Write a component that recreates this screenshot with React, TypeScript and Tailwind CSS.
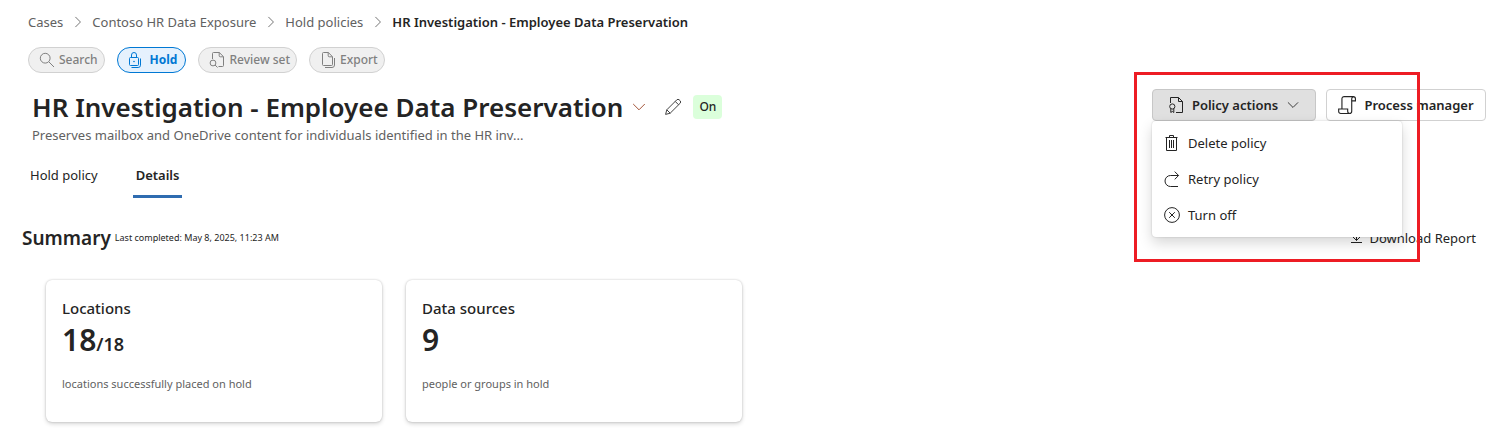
import React, { useState } from 'react';

type IconProps = { className?: string };

function Icon({ className, children }: IconProps & { children: React.ReactNode }) {
  return (
    <svg
      viewBox="0 0 16 16"
      fill="none"
      stroke="currentColor"
      strokeWidth="1"
      aria-hidden="true"
      className={`shrink-0 ${className ?? 'w-4 h-4'}`}
    >
      {children}
    </svg>
  );
}

function SearchIcon(props: IconProps) {
  return (
    <Icon {...props}>
      <circle cx="6.2" cy="6.2" r="4.9" />
      <path d="M9.8 9.8 15 15" />
    </Icon>
  );
}

function HoldIcon(props: IconProps) {
  return (
    <Icon {...props}>
      <rect x="1.5" y="5.5" width="9" height="8" rx="1" />
      <path d="M3.5 5.5V3a2.5 2.5 0 0 1 5 0v2.5" />
      <circle cx="6" cy="9.5" r="0.8" fill="currentColor" stroke="none" />
      <path d="M12.5 6.5v6.7a2.3 2.3 0 0 1-2.3 2.3H3.5" />
    </Icon>
  );
}

function ReviewSetIcon(props: IconProps) {
  return (
    <Icon {...props}>
      <path d="M3.5 7V1.5a1 1 0 0 1 1-1h5.8l4.2 4.2v8.8a1 1 0 0 1-1 1H9.5" />
      <path d="M10.2.5v3.3a1 1 0 0 0 1 1h3.3" />
      <circle cx="4" cy="11" r="2.9" />
      <path d="m6.1 13 2.4 2.5" />
    </Icon>
  );
}

function ExportIcon(props: IconProps) {
  return (
    <Icon {...props}>
      <path d="M2.5 1.5a1 1 0 0 1 1-1h4.8l4.2 4.2v7.8a1 1 0 0 1-1 1h-8a1 1 0 0 1-1-1z" />
      <path d="M8.2.5v3.3a1 1 0 0 0 1 1h3.3" />
      <path d="M14.5 6v7a2.5 2.5 0 0 1-2.5 2.5H5" />
    </Icon>
  );
}

function PolicyIcon(props: IconProps) {
  return (
    <Icon {...props}>
      <path d="M2.5 6V.5h8l4 4v11H8" />
      <path d="M10.5.5v4h4" />
      <circle cx="4.3" cy="9.5" r="2.6" />
      <path d="M2.8 11.7v3.8l1.5-1.1 1.5 1.1v-3.8" />
    </Icon>
  );
}

function ScrollIcon(props: IconProps) {
  return (
    <Icon {...props}>
      <path d="M3.5 11.5v-9a2 2 0 0 1 2-2h8a2 2 0 0 1 2 2v1.8h-3.3" />
      <path d="M13.8.6a1.9 1.9 0 0 0-1.6 1.9v11a2 2 0 0 1-2 2" />
      <path d="M.6 11.6h8v1.9a2 2 0 0 0 2 2H2.4a1.8 1.8 0 0 1-1.8-1.8z" />
    </Icon>
  );
}

function TrashIcon(props: IconProps) {
  return (
    <Icon {...props}>
      <path d="M1.5 2.5h12M5.5 2.5v-2h4v2M2.5 2.5v13h10v-13" />
      <path d="M5.5 5v8M7.5 5v8M9.5 5v8" />
    </Icon>
  );
}

function RetryIcon(props: IconProps) {
  return (
    <Icon {...props}>
      <path d="M14.5 4.5H6.5a5.5 5.5 0 0 0 0 11h7.5" />
      <path d="m10.7.6 3.9 3.9-3.9 3.9" />
    </Icon>
  );
}

function TurnOffIcon(props: IconProps) {
  return (
    <Icon {...props}>
      <circle cx="8" cy="8" r="7.4" />
      <path d="m5.2 5.2 5.6 5.6M10.8 5.2l-5.6 5.6" />
    </Icon>
  );
}

function PencilIcon(props: IconProps) {
  return (
    <Icon {...props}>
      <path d="m.6 15.4 1.2-4.6L11.6 1a1.9 1.9 0 0 1 2.8 0l.6.6a1.9 1.9 0 0 1 0 2.8L5.2 14.2z" />
      <path d="m10.2 2.4 3.4 3.4M1.8 10.8l3.4 3.4" />
    </Icon>
  );
}

function DownloadIcon(props: IconProps) {
  return (
    <Icon {...props}>
      <path d="M7.5 1.5v9M4 7l3.5 3.5L11 7M2 12.5h11" />
    </Icon>
  );
}

function ChevronDownIcon(props: IconProps) {
  return (
    <Icon {...props}>
      <path d="m2.2 5 5.8 5.8L13.8 5" />
    </Icon>
  );
}

function ChevronRightIcon(props: IconProps) {
  return (
    <Icon {...props}>
      <path d="m5 2.2 5.8 5.8L5 13.8" />
    </Icon>
  );
}

const crumbs = ['Cases', 'Contoso HR Data Exposure', 'Hold policies'];

const steps = [
  { label: 'Search', icon: SearchIcon },
  { label: 'Hold', icon: HoldIcon },
  { label: 'Review set', icon: ReviewSetIcon },
  { label: 'Export', icon: ExportIcon },
];

const menuItems = [
  { label: 'Delete policy', icon: TrashIcon },
  { label: 'Retry policy', icon: RetryIcon },
  { label: 'Turn off', icon: TurnOffIcon },
];

const tabs = ['Hold policy', 'Details'];

const cards = [
  { title: 'Locations', value: '18', total: '/18', note: 'locations successfully placed on hold' },
  { title: 'Data sources', value: '9', total: '', note: 'people or groups in hold' },
];

export default function App() {
  const [activeStep, setActiveStep] = useState('Hold');
  const [activeTab, setActiveTab] = useState('Details');
  const [menuOpen, setMenuOpen] = useState(true);

  return (
    <div className="bg-white text-[#242424] font-['Noto_Sans',sans-serif] text-[13px] leading-5 pt-3 pb-5">
      {/* Breadcrumb */}
      <nav aria-label="Breadcrumb" className="px-7">
        <ol className="flex items-center">
          {crumbs.map((crumb) => (
            <li key={crumb} className="flex items-center text-[#616161]">
              <a href="#">{crumb}</a>
              <ChevronRightIcon className="w-3.5 h-3.5 ml-2 mr-[7px]" />
            </li>
          ))}
          <li className="font-semibold" aria-current="page">
            HR Investigation - Employee Data Preservation
          </li>
        </ol>
      </nav>

      {/* Workflow steps */}
      <div className="flex gap-3 px-7 mt-[15px]">
        {steps.map(({ label, icon: StepIcon }) => (
          <button
            key={label}
            type="button"
            onClick={() => setActiveStep(label)}
            className={`flex items-center h-[26px] pl-2.5 rounded-full border text-xs ${
              activeStep === label
                ? 'gap-1.5 pr-2 bg-[#e5f1fd] border-[#0078d4] text-[#0078d4] font-bold'
                : 'gap-1 pr-1.5 bg-[#f0f0f0] border-[#d1d1d1] text-[#808080] font-medium'
            }`}
          >
            <StepIcon />
            {label}
          </button>
        ))}
      </div>

      {/* Title row */}
      <header className="flex items-start justify-between pl-8 pr-4 mt-4">
        <div>
          <div className="flex items-center h-9">
            <h1 className="text-[26px] leading-9 font-semibold">
              HR Investigation - Employee Data Preservation
            </h1>
            <button type="button" aria-label="Switch policy" className="ml-2 text-[#a4553a]">
              <ChevronDownIcon className="w-4 h-4" />
            </button>
            <button type="button" aria-label="Rename policy" className="ml-4.5 text-[#424242]">
              <PencilIcon className="w-4 h-4" />
            </button>
            <span className="flex items-center h-6 ml-3 px-1.5 rounded-sm bg-[#dbffdb] text-xs font-medium">
              On
            </span>
          </div>
          <p className="text-[#616161]">
            Preserves mailbox and OneDrive content for individuals identified in the HR inv...
          </p>
        </div>

        <div className="relative flex gap-2.5">
          <button
            type="button"
            aria-expanded={menuOpen}
            onClick={() => setMenuOpen(!menuOpen)}
            className="flex items-center justify-center gap-2 w-41 h-8 rounded-sm border border-[#c7c7c7] bg-[#e0e0e0] font-semibold"
          >
            <PolicyIcon />
            Policy actions
            <ChevronDownIcon className="w-3.5 h-3.5" />
          </button>
          <button
            type="button"
            className="flex items-center justify-center gap-2 w-40 h-8 rounded-sm border border-[#d1d1d1] bg-white font-semibold"
          >
            <ScrollIcon className="w-4.5 h-4.5" />
            Process manager
          </button>

          {menuOpen && (
            <ul className="absolute left-0 top-full z-10 w-[250px] py-1 rounded-sm bg-white shadow-[0_0_2px_rgba(0,0,0,0.2),0_6px_14px_rgba(0,0,0,0.16)]">
              {menuItems.map(({ label, icon: ItemIcon }) => (
                <li key={label}>
                  <button type="button" className="flex items-center gap-2 w-full h-9 px-3">
                    <ItemIcon />
                    {label}
                  </button>
                </li>
              ))}
            </ul>
          )}

          {/* Highlight frame around the menu */}
          <div className="absolute -left-4.5 -top-[17px] z-20 w-[286px] h-[190px] border-3 border-[#ed1c24] pointer-events-none" />
        </div>
      </header>

      {/* Tabs */}
      <div role="tablist" className="flex gap-8 pl-[27px] mt-5">
        {tabs.map((tab) => (
          <button
            key={tab}
            type="button"
            role="tab"
            aria-selected={activeTab === tab}
            onClick={() => setActiveTab(tab)}
            className={`px-[3px] pb-2.5 border-b-3 ${
              activeTab === tab ? 'border-[#2f6cb0] font-semibold' : 'border-transparent'
            }`}
          >
            {tab}
          </button>
        ))}
      </div>

      {/* Summary */}
      <section className="mt-7 pl-5.5">
        <div className="flex items-center justify-between pr-6.5">
          <div className="flex items-center gap-1">
            <h2 className="text-[19px] leading-6 font-semibold">Summary</h2>
            <span className="text-[9px]">Last completed: May 8, 2025, 11:23 AM</span>
          </div>
          <button type="button" className="flex items-center gap-1">
            <DownloadIcon />
            Download Report
          </button>
        </div>

        <div className="flex flex-wrap gap-6 mt-[30px] pl-6">
          {cards.map((card) => (
            <article
              key={card.title}
              className="w-84 h-[142px] p-4 rounded-md bg-white shadow-[0_0_2px_rgba(0,0,0,0.22),0_2px_4px_rgba(0,0,0,0.16)]"
            >
              <h3 className="text-[15px] leading-6 font-medium">{card.title}</h3>
              <p className="text-[30px] leading-10 font-semibold">
                {card.value}
                {card.total && <span className="text-lg">{card.total}</span>}
              </p>
              <p className="mt-3.5 text-[11px] leading-5 text-[#616161]">{card.note}</p>
            </article>
          ))}
        </div>
      </section>
    </div>
  );
}
